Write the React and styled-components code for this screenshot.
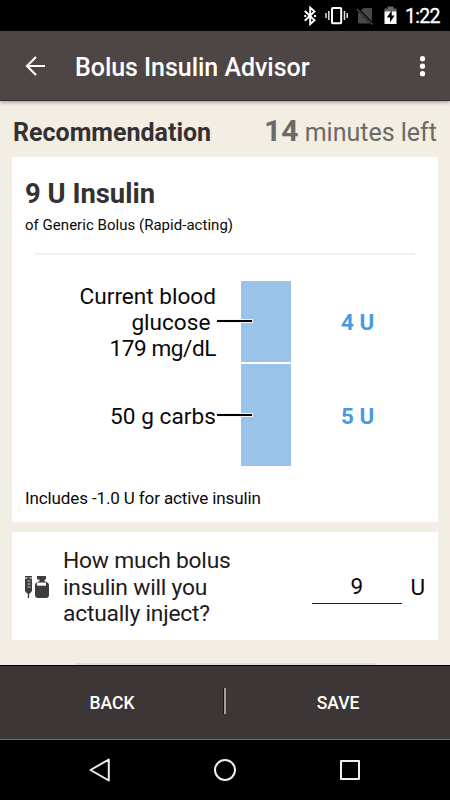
import React, { useState } from 'react';
import styled, { createGlobalStyle, ThemeProvider } from 'styled-components';

const theme = {
  header: '#4e4545',
  footer: '#3c3736',
  page: '#f2eee3',
  bar: '#99c3e9',
  accent: '#4a99dc',
  heading: '#353132',
}

const GlobalStyle = createGlobalStyle`
  * { box-sizing: border-box; }
  body {
    margin: 0;
    background: #000;
    font-family: Roboto, 'Liberation Sans', sans-serif;
  }
`;

const Screen = styled.div`
  width: 450px;
  height: 800px;
  display: flex;
  flex-direction: column;
  overflow: hidden;
  color: #0b0909;
`;

const StatusBar = styled.div`
  height: 31px;
  flex: none;
  display: flex;
  align-items: center;
  padding-left: 303px;
  background: #000;
  color: #fff;
  svg { flex: none; }
`;

const Clock = styled.span`
  font-size: 19.5px;
  line-height: 20px;
  font-weight: 400;
  letter-spacing: -0.7px;
  -webkit-text-stroke: 0.3px #fff;
  margin-left: 7px;
  margin-top: 3px;
  white-space: nowrap;
`;

const Header = styled.header`
  height: 70px;
  flex: none;
  display: flex;
  align-items: center;
  padding-left: 24px;
  background: ${(props) => props.theme.header};
  border-bottom: 1px solid #3c2d30;
  box-shadow: 0 1px 4px rgba(60, 45, 40, 0.5);
  z-index: 1; // keep the shadow over the content
`;

const Title = styled.h1`
  margin: 4px 0 0 28px;
  flex: 1;
  color: #fff;
  font-size: 25px;
  line-height: 30px;
  font-weight: 500;
  letter-spacing: -0.04px;
  white-space: nowrap;
`;

const Content = styled.main`
  height: 564px;
  flex: none;
  display: flex;
  flex-direction: column;
  padding: 0 12px;
  background: ${(props) => props.theme.page};
`;

const Summary = styled.div`
  height: 56px;
  display: flex;
  justify-content: space-between;
  align-items: baseline;
  padding: 12px 1px 0;
  white-space: nowrap;
`;

const SectionTitle = styled.h2`
  margin: 0;
  font-size: 25px;
  font-weight: 700;
  color: ${(props) => props.theme.heading};
`;

const TimeLeft = styled.div`
  font-size: 25px;
  color: #6c6a66;
  b { font-size: 30px; }
`;

const Card = styled.section`
  background: #fff;
  height: ${(props) => props.$height}px;
  flex: none;
`;

const DoseCard = styled(Card)`
  padding: 21px 13px 0;
`;

const Dose = styled.div`
  font-size: 27.4px;
  line-height: 32px;
  font-weight: 700;
  color: ${(props) => props.theme.heading};
`;

const Note = styled.div`
  font-size: ${(props) => props.$size}px;
  line-height: 20px;
  white-space: nowrap;
`;

const Product = styled(Note)`
  margin-top: 5px;
  letter-spacing: 0.03px;
`;

const ActiveInsulin = styled(Note)`
  margin-top: 22px;
  letter-spacing: -0.12px;
`;

const Divider = styled.hr`
  width: 380px;
  height: 2px;
  margin: 18px 0 26px 10px;
  border: 0;
  background: #f5f1ea;
`;

const Chart = styled.div`
  display: grid;
  grid-template-columns: 191px 25px 50px 1fr;
  grid-template-rows: 81px 102px;
  row-gap: 2px;
`;

const Label = styled.div`
  align-self: center;
  text-align: right;
  font-size: 22.6px;
  line-height: 26px;
  padding-top: 3px;
`;

const LabelLine = styled.div`
  letter-spacing: ${(props) => props.$tracking || 0}px;
`;

const Leader = styled.div`
  align-self: center;
  width: 37px;
  height: 4px;
  margin-bottom: 1px;
  background: #000;
  border: 1px solid #f4f4f4;
  z-index: 1;
`;

const Bar = styled.div`
  background: ${(props) => props.theme.bar};
`;

const Units = styled.div`
  align-self: center;
  padding-left: 50px;
  padding-top: 1px;
  font-size: 22.4px;
  line-height: 26px;
  font-weight: 700;
  color: ${(props) => props.theme.accent};
`;

const InjectCard = styled(Card)`
  display: flex;
  align-items: center;
  margin-top: 10px;
  padding: 2px 13px 0 12px;
`;

const Question = styled.label`
  width: 190px;
  margin-left: 13px;
  padding-top: 2px;
  font-size: 22.8px;
  line-height: 26.4px;
  letter-spacing: -0.2px;
  white-space: pre-line;
  color: #211b1b;
`;

const DoseInput = styled.input`
  width: 90px;
  height: 35px;
  margin-left: auto;
  margin-bottom: 2px;
  padding: 0 1px 0 0;
  border: 0;
  border-bottom: 1px solid #222;
  border-radius: 0;
  outline: none;
  background: none;
  text-align: center;
  font: 22.5px Roboto, sans-serif;
  color: #0b0909;
`;

const Unit = styled.span`
  margin-left: 8px;
  font-size: 22.5px;
`;

const ScrollHint = styled.div`
  width: 301px;
  height: 2px;
  margin: auto 0 0 63px;
  background: #dedfda;
`;

const Footer = styled.footer`
  height: 75px;
  flex: none;
  display: flex;
  align-items: center;
  background: ${(props) => props.theme.footer};
  border-top: 1px solid #000;
  border-bottom: 1px solid #716d6b;
`;

const FooterButton = styled.button`
  flex: 1;
  height: 100%;
  padding: 1px 0 0;
  border: 0;
  background: none;
  color: #fff;
  font: 500 17.5px Roboto, sans-serif;
`;

const Separator = styled.div`
  width: 2px;
  height: 26px;
  margin-top: -3px;
  background: #a39e9c;
  box-shadow: -1px 0 #171413;
`;

const NavBar = styled.nav`
  height: 60px;
  flex: none;
  background: #000;
  display: flex;
  align-items: center;
  justify-content: space-between;
  padding: 0 88px;
`;

const doses = [
  {
    id: 'glucose',
    units: 4,
    lines: [
      { text: 'Current blood' },
      { text: 'glucose\u00a0' },
      { text: '179 mg/dL', tracking: -0.45 },
    ],
  },
  { id: 'carbs', units: 5, lines: [{ text: '50 g carbs', tracking: 0.05 }] },
]

const StatusIcons = () => (
  <svg width="95" height="31" viewBox="303 0 95 31" fill="none">
    <path d="M304.8 11L314.5 20.3L310.2 24.2V7.6L314.5 11.5L304.8 20.8" stroke="#fff" strokeWidth="1.9" />
    <path d="M304.3 15h2v2h-2zM314 15h2v2h-2z" fill="#fff" />
    <rect x="332" y="8" width="9.2" height="15.2" rx="0.8" stroke="#fff" strokeWidth="2" />
    <path d="M328.8 11v9M326 13v5M344.5 11v9M347.2 13v5" stroke="#ddd" strokeWidth="1.5" />
    <path d="M363.5 8H371q1 0 1 1V23.5H359q-1 0-1-1V13z" fill="#494949" />
    <path d="M357.5 9L373 24.5" stroke="#000" strokeWidth="3" />
    <path d="M356.8 9L372.5 24.5" stroke="#4c4c4c" strokeWidth="1.3" />
    <path d="M384.5 8.5h3V6.5h6v2h3V12h-12z" fill="#666" />
    <path d="M384.5 11.5h12V24h-12z" fill="#fff" />
    <path d="M391.7 10.5L386.8 17.5H390V22.5L394.5 15.5H391.7z" fill="#000" />
  </svg>
)

function App() {
  const [amount, setAmount] = useState('9');
  return (
    <ThemeProvider theme={theme}>
      <GlobalStyle />
      <Screen>
        <StatusBar>
          <StatusIcons />
          <Clock>1:22</Clock>
        </StatusBar>

        <Header>
          <svg width="23" height="22" viewBox="0 0 23 22" fill="none" stroke="#fff" strokeWidth="2.2">
            <path d="M21 11H3M12 2L3 11L12 20" />
          </svg>
          <Title>Bolus Insulin Advisor</Title>
          <svg width="55" height="22" viewBox="0 0 55 22" fill="#fff">
            <circle cx="27.5" cy="3.7" r="2.6" />
            <circle cx="27.5" cy="11.2" r="2.6" />
            <circle cx="27.5" cy="18.7" r="2.6" />
          </svg>
        </Header>

        <Content>
          <Summary>
            <SectionTitle>Recommendation</SectionTitle>
            <TimeLeft><b>14</b> minutes left</TimeLeft>
          </Summary>

          <DoseCard $height={365}>
            <Dose>9 U Insulin</Dose>
            <Product $size={15}>of Generic Bolus (Rapid-acting)</Product>
            <Divider />
            <Chart>
              {doses.map((dose) => (
                <React.Fragment key={dose.id}>
                  <Label>
                    {dose.lines.map((line) => (
                      <LabelLine key={line.text} $tracking={line.tracking}>{line.text}</LabelLine>
                    ))}
                  </Label>
                  <Leader />
                  <Bar />
                  <Units>{dose.units} U</Units>
                </React.Fragment>
              ))}
            </Chart>
            <ActiveInsulin $size={17}>Includes -1.0 U for active insulin</ActiveInsulin>
          </DoseCard>

          <InjectCard $height={108}>
            {/* syringe and vial */}
            <svg width="26" height="24" viewBox="24 574 26 24" fill="#403c3b">
              <path d="M25 575h7v1.5h-2.5v1H32V590l-2 2.5h-.8V597h-1.4v-4.5H27L25 590v-12.5h2.5v-1H25z" />
              <path d="M27.5 580h3M27.5 583h3M27.5 586h3" stroke="#ddd" strokeWidth="0.9" />
              <path d="M37 575h9v3.5h-1.5V580l2 1q2.5 1 2.5 3V594q0 3-3 3h-8q-3 0-3-3V584q0-2 2.5-3l2-1v-1.5H37z" />
              <path d="M37 581.5h9v3.2h-9z" fill="#fff" />
            </svg>
            <Question htmlFor="amount">{'How much bolus\ninsulin will you\nactually inject?'}</Question>
            <DoseInput id="amount" value={amount} onChange={(e) => setAmount(e.target.value)} />
            <Unit>U</Unit>
          </InjectCard>
          <ScrollHint />
        </Content>

        <Footer>
          <FooterButton>BACK</FooterButton>
          <Separator />
          <FooterButton>SAVE</FooterButton>
        </Footer>

        <NavBar>
          <svg width="24" height="26" viewBox="0 0 24 26" fill="none" stroke="#eee" strokeWidth="2" strokeLinejoin="round">
            <path d="M2.5 13L20.8 2.5V23.5z" />
          </svg>
          <svg width="24" height="24" viewBox="0 0 24 24" fill="none" stroke="#eee" strokeWidth="2">
            <circle cx="12" cy="12" r="10" />
          </svg>
          <svg width="24" height="24" viewBox="0 0 24 24" fill="none" stroke="#eee" strokeWidth="2" strokeLinejoin="round">
            <rect x="3" y="3" width="18" height="18" />
          </svg>
        </NavBar>
      </Screen>
    </ThemeProvider>
  );
}

export default App;
